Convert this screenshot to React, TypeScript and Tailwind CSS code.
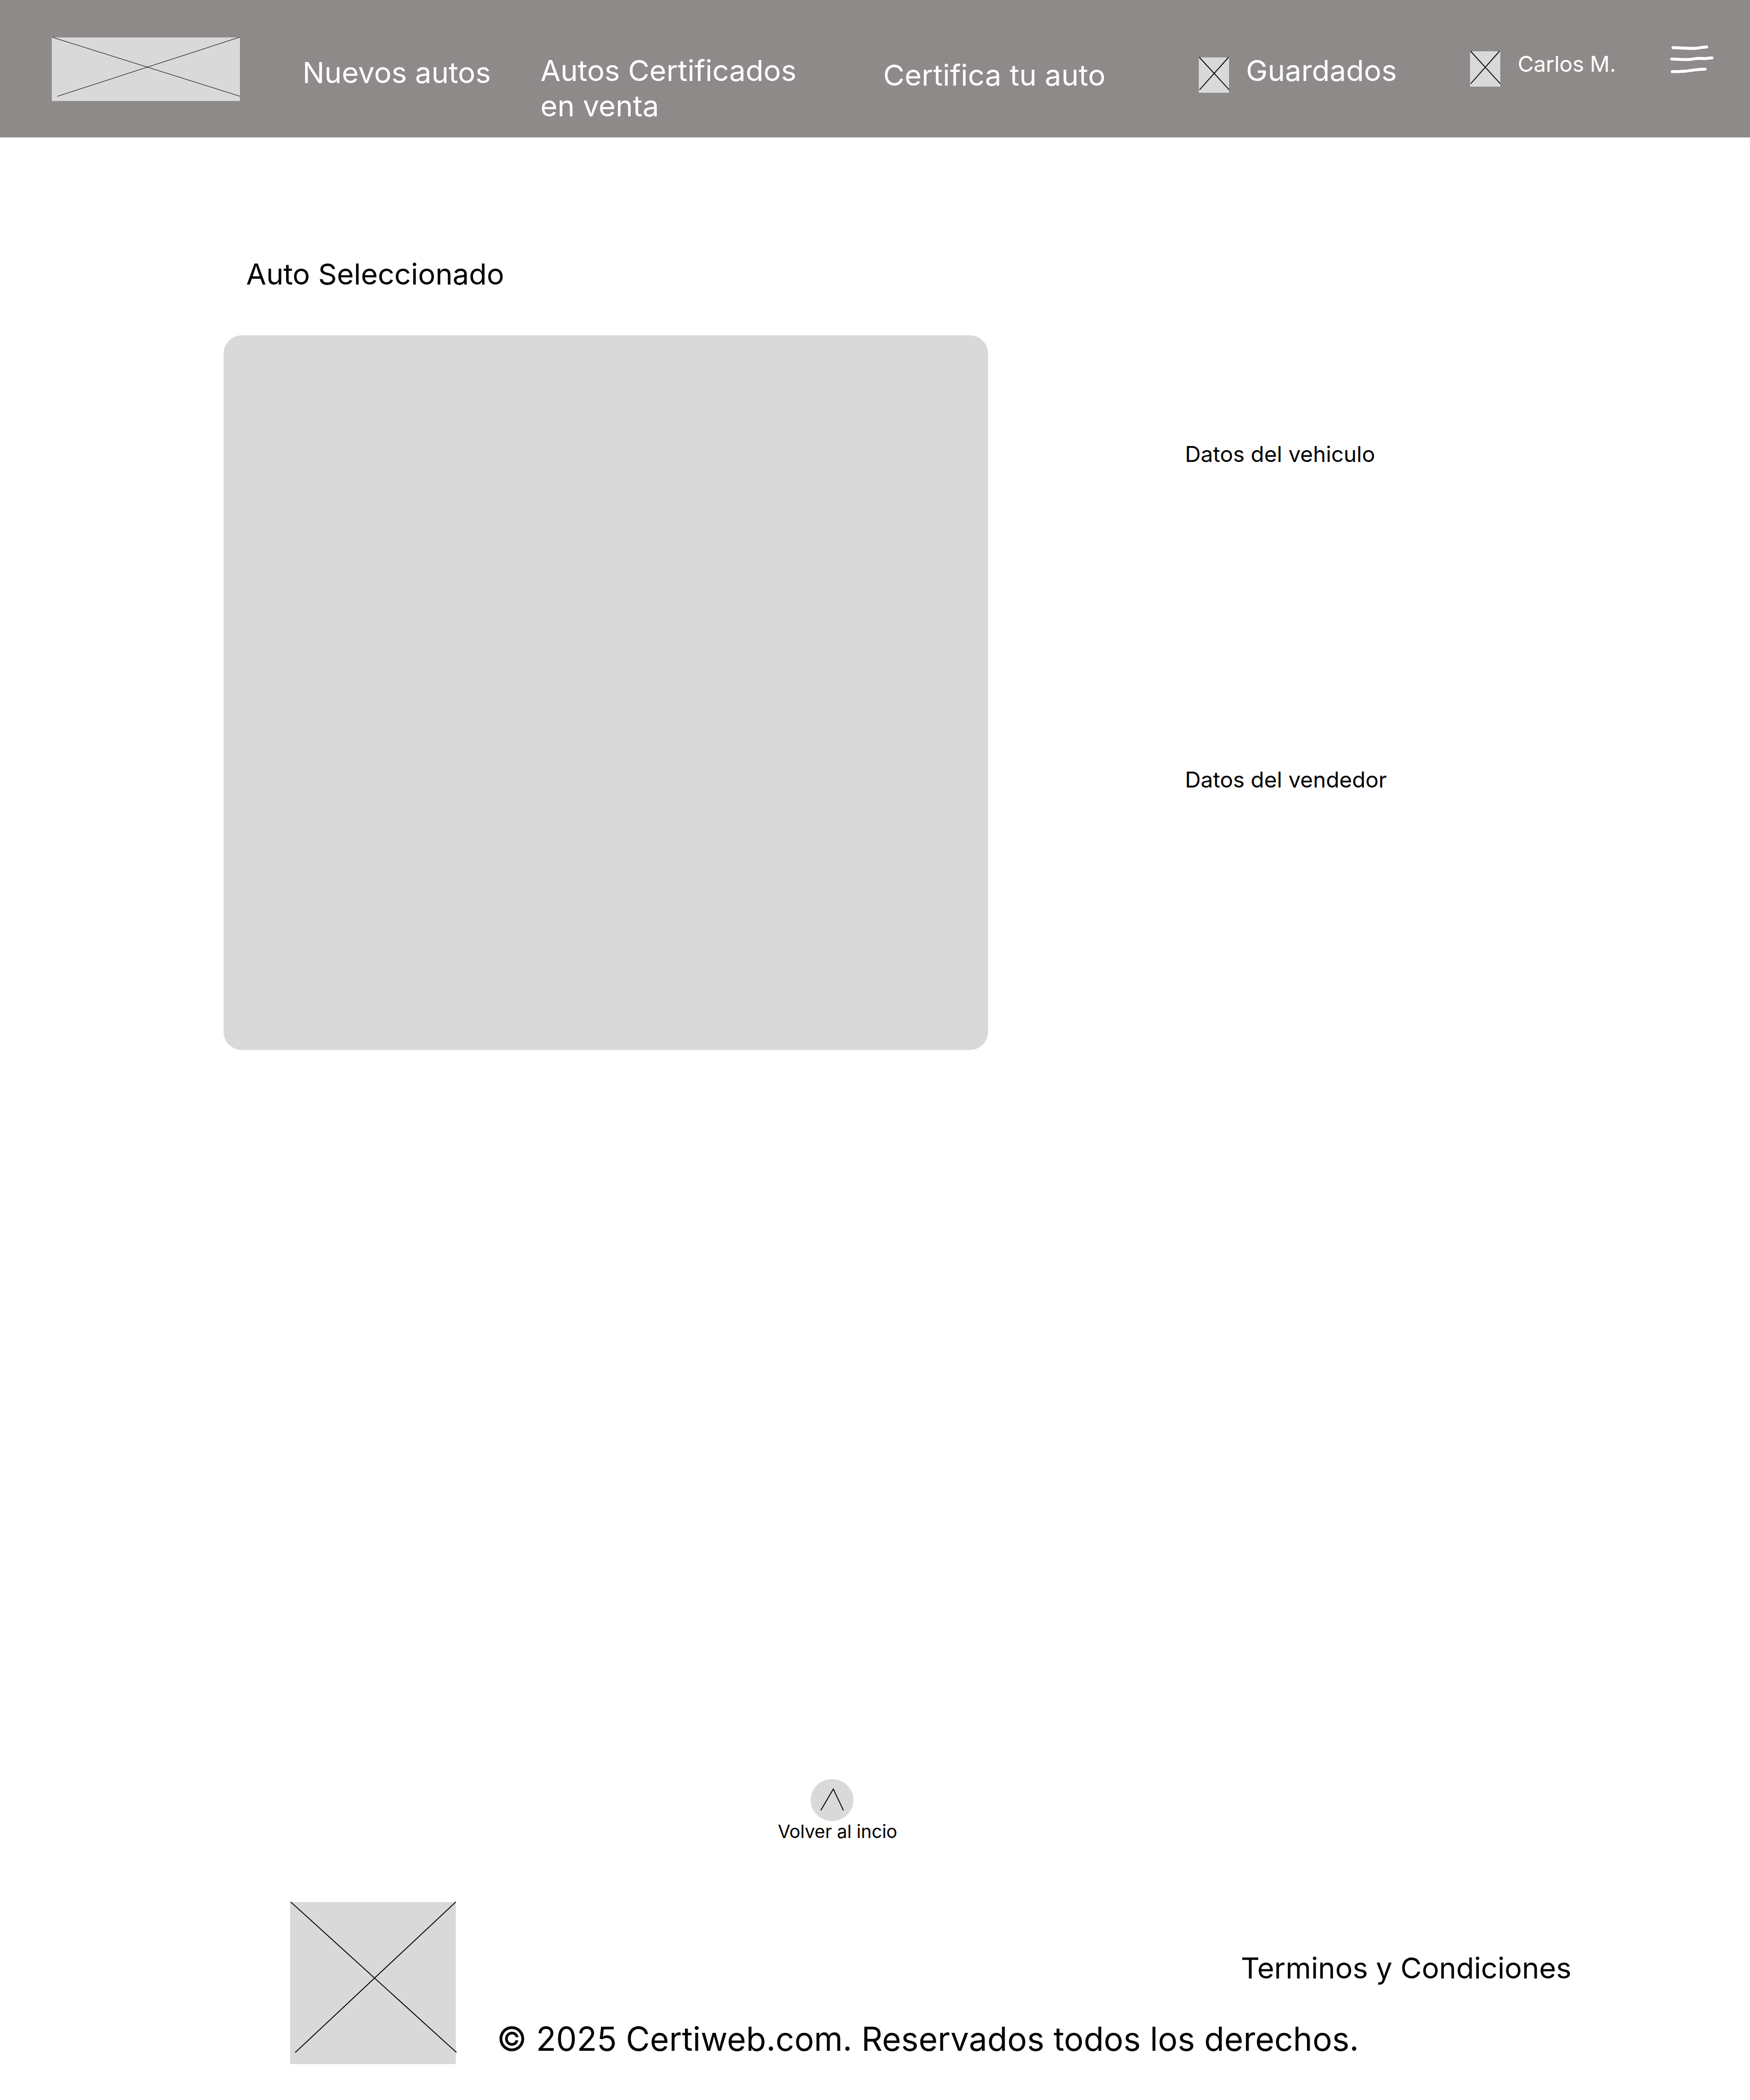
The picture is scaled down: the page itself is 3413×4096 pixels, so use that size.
type PlaceholderProps = {
  width: number;
  height: number;
  path: string;
  stroke: number;
  className: string;
};

/** Grey image placeholder crossed by two thin diagonals. */
function Placeholder({ width, height, path, stroke, className }: PlaceholderProps) {
  return (
    <svg
      viewBox={`0 0 ${width} ${height}`}
      preserveAspectRatio="none"
      fill="none"
      stroke="#000"
      strokeWidth={stroke}
      className={`shrink-0 overflow-visible bg-[#d9d9d9] ${className}`}
    >
      <path d={path} />
    </svg>
  );
}

function MenuIcon() {
  return (
    <svg
      viewBox="0 0 100 64"
      fill="none"
      stroke="#fff"
      strokeWidth="6.4"
      strokeLinecap="round"
      strokeLinejoin="round"
      className="mt-[86px] ml-[80px] h-[57px] w-[89px] shrink-0 overflow-visible"
    >
      <path d="M7.5 7.6C20 8 42 9.6 56 9.3C64 8.8 70 6.6 81.5 6.4" />
      <path d="M5 32.8C17 33.4 32 34.4 44 33.6C52 33 58 31.2 64 31.2C72 31.2 76 31.9 80 31.6C85 31.2 88 30.2 93 30.2" />
      <path d="M6 60.3C16 60.3 24 60.4 34 59.4C46 58 58 55.3 78 55" />
    </svg>
  );
}

function Header() {
  return (
    <header className="flex h-[268px] shrink-0 items-start bg-[#8e8a89] text-[56.88px] leading-[69px] text-white">
      <Placeholder
        width={412}
        height={140}
        stroke={1.1}
        path="M1 -0.4L412.6 129.7M411 -0.4L12.3 129.7"
        className="mt-[73px] ml-[101px] h-[124px] w-[367px]"
      />
      <nav className="flex items-start whitespace-nowrap">
        <a className="mt-[107px] ml-[122px] w-[464px]">Nuevos autos</a>
        <a className="mt-[103px] w-[668.5px]">
          Autos Certificados
          <br />
          en venta
        </a>
        <a className="mt-[112px] w-[615px] tracking-[0.15px]">Certifica tu auto</a>
        <a className="flex w-[529.5px] items-start pt-[103px]">
          <Placeholder
            width={66}
            height={78}
            stroke={2}
            path="M1 -0.5L66.5 71.5M65 -0.5L1.5 71.5"
            className="mt-[9px] h-[69px] w-[59px]"
          />
          <span className="ml-[33.5px]">Guardados</span>
        </a>
        <a className="flex items-start pt-[99px] text-[42.66px] leading-[51px]">
          <Placeholder
            width={66}
            height={78}
            stroke={2}
            path="M1 -0.5L66.5 71.5M65 -0.5L1.5 71.5"
            className="mt-px h-[69px] w-[58.5px]"
          />
          <span className="ml-[34.5px] w-[216px] tracking-[-0.2px]">Carlos M.</span>
        </a>
      </nav>
      <MenuIcon />
    </header>
  );
}

export default function App() {
  return (
    <div className="flex h-[4096px] w-[3413px] flex-col overflow-hidden bg-white font-['Inter',sans-serif] text-black">
      <Header />

      <main className="flex shrink-0 flex-col pt-[232px]">
        <h1 className="ml-[480px] text-[56.88px] leading-[69px] tracking-[-0.1px]">Auto Seleccionado</h1>
        <div className="mt-[85px] ml-[435.5px] flex">
          <div className="h-[1394px] w-[1491.5px] rounded-[35.5px] bg-[#d9d9d9]" />
          <div className="ml-[384px] flex flex-col gap-[584px] pt-[206px] text-[42.66px] leading-[51px]">
            <h2>Datos del vehiculo</h2>
            <h2>Datos del vendedor</h2>
          </div>
        </div>
      </main>

      <a className="mt-[1422px] ml-[1517px] flex shrink-0 flex-col text-[35.55px] leading-[43px] tracking-[-0.12px]">
        <svg viewBox="0 0 94 92" preserveAspectRatio="none" className="-mb-px ml-[63.5px] h-[82px] w-[83.5px]">
          <ellipse cx="47" cy="46" rx="47" ry="46" fill="#d9d9d9" />
          <path d="M22.3 68.5L49.7 21.8L72 68.5" fill="none" stroke="#000" strokeWidth="2" />
        </svg>
        Volver al incio
      </a>

      <footer className="mt-[116px] ml-[565.5px] flex shrink-0 whitespace-nowrap">
        <Placeholder
          width={364}
          height={356}
          stroke={2}
          path="M1 -0.5L365 330.5M363.5 -0.5L11 330.5"
          className="h-[316px] w-[323.5px]"
        />
        <div className="ml-[80px] flex flex-col pt-[94px]">
          <a className="ml-[1451px] text-[56.88px] leading-[69px] tracking-[-0.16px]">Terminos y Condiciones</a>
          <p className="mt-[65px] text-[64px] leading-[77px]">© 2025 Certiweb.com. Reservados todos los derechos.</p>
        </div>
      </footer>
    </div>
  );
}
